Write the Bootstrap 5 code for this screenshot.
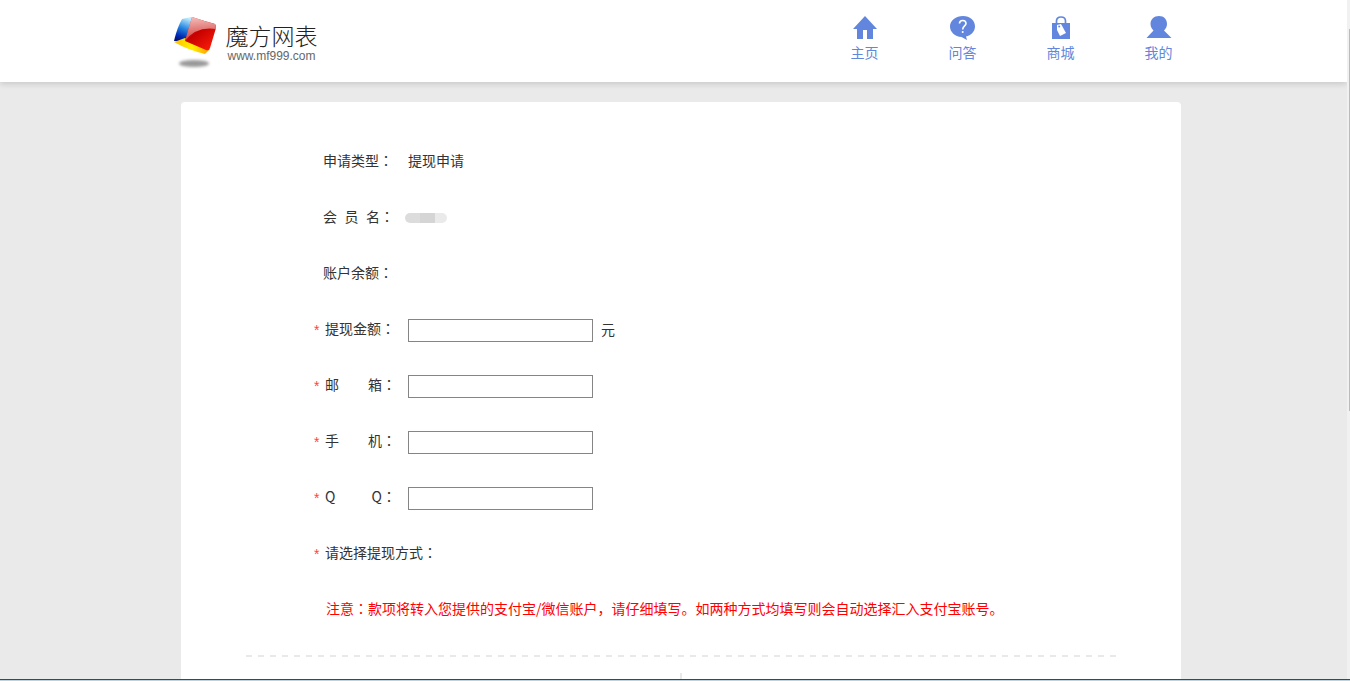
<!DOCTYPE html>
<html lang="zh-CN">
<head>
<meta charset="utf-8">
<meta name="viewport" content="width=device-width, initial-scale=1">
<title>魔方网表 - 提现申请</title>
<link href="https://cdn.jsdelivr.net/npm/bootstrap@5.3.0/dist/css/bootstrap.min.css" rel="stylesheet">
<style>
body { background: #eaeaea; color: #333; font: 400 14px/20px "Noto Sans CJK SC", sans-serif; }
.site-header { background: #fff; box-shadow: 0 2px 6px rgba(0,0,0,.15); height: 82px; z-index: 1; }
.site-width { max-width: 1000px; }
.site-nav { gap: 70px; padding-right: 1px; }
.site-nav a { color: #6286de; text-decoration: none; white-space: nowrap; }
.site-nav svg { height: 24px; margin-bottom: 2px; }
.brand { color: #222; }
.brand-words { padding: 4px 0 0 10px; }
.brand-name { font-size: 23px; line-height: 30px; font-weight: 300; }
.brand-url { font: 12px/12px "Liberation Sans", sans-serif; color: #666; padding-left: 2px; }
.page-area { padding: 20px 0 0 15px; }
.sheet { background: #fff; border-radius: 4px 4px 0 0; padding: 30px 65px 0; }
.form-lines { padding-left: 67px; }
.form-line { height: 56px; }
.field-label { width: 95px; }
.star { width: 12px; color: #ff4343; font: 14px/16px "Liberation Sans", sans-serif; padding: 4px 0 0 1px; }
.no-star { width: 10px; }
.spread { width: 57px; }
.colon { font-family: "Noto Sans CJK TC", sans-serif; }
.entry { width: 185px; height: 23px; border: 1px solid #858585; padding: 0 4px; margin-top: 5px; }
.unit { margin-left: 8px; padding-top: 1px; }
.masked { width: 42px; height: 10px; border-radius: 5px; margin-left: -3px; margin-top: 4px; background: linear-gradient(90deg, #dcdcdc 15px, #d5d5d5 15px 30px, #eaeaea 30px); }
.notice { color: #f00; padding-left: 13px; }
.dashes { height: 2px; margin-top: 19px; background: repeating-linear-gradient(90deg, #e9e9e9 0 6px, transparent 6px 12px); }
.column-rule { width: 2px; height: 300px; margin: 16px auto 0; background: #e9e9e9; }
.scroll-track { width: 3px; background: #f1f1f1; }
.scroll-thumb { width: 1px; height: 382px; margin: 29px 0 0 2px; background: #bbb; }
.bottom-edge { height: 2px; background: #bcd3e0; border-top: 1px solid #40484d; }
</style>
<script src="https://cdn.jsdelivr.net/npm/bootstrap@5.3.0/dist/js/bootstrap.bundle.min.js"></script>
</head>
<body class="vh-100 overflow-hidden d-flex flex-column">
<div class="d-flex flex-grow-1 overflow-hidden">
  <div class="flex-grow-1 d-flex flex-column overflow-hidden">
    <header class="site-header flex-shrink-0 position-relative">
      <div class="site-width mx-auto d-flex justify-content-between">
        <a href="#" class="brand d-flex text-decoration-none pt-3">
          <svg width="42" height="54" viewBox="0 0 42 54" aria-hidden="true">
            <defs>
              <linearGradient id="blue" x1=".6" y1="0" x2=".3" y2="1"><stop offset="0" stop-color="#bceaff"/><stop offset=".45" stop-color="#2585e0"/><stop offset=".8" stop-color="#002bb5"/><stop offset="1" stop-color="#001080"/></linearGradient>
              <linearGradient id="red" x1="0" y1="0" x2=".7" y2="1"><stop offset="0" stop-color="#e94b45"/><stop offset=".5" stop-color="#c60000"/><stop offset="1" stop-color="#f51a08"/></linearGradient>
              <linearGradient id="shine" x1=".3" y1="0" x2=".4" y2="1"><stop offset="0" stop-color="#f3bebb"/><stop offset="1" stop-color="#d03a37"/></linearGradient>
              <linearGradient id="yellow"><stop offset="0" stop-color="#ffbf00"/><stop offset=".5" stop-color="#fff000"/><stop offset="1" stop-color="#ff9d00"/></linearGradient>
              <filter id="soft" x="-20%" y="-70%" width="140%" height="240%"><feGaussianBlur stdDeviation="1.8"/></filter>
            </defs>
            <ellipse cx="20" cy="47.500" rx="15" ry="3.500" fill="#999" filter="url(#soft)"/>
            <path d="M8 3Q12 2 18 1L12 25 0 25Q3 12 8 3Z" fill="url(#blue)"/>
            <path d="M0 26 11 22 36 33 31 38Q14 34 0 26Z" fill="url(#yellow)"/>
            <path d="M18 1Q30 5 41 8 42 9 42 12L36 32Q35 35 32 34L11 25Z" fill="url(#red)"/>
            <path d="M18 1Q30 5 41 8 42 9 42 13 22 10 11 25Z" fill="url(#shine)"/>
          </svg>
          <span class="brand-words d-flex flex-column">
            <span class="brand-name">魔方网表</span>
            <span class="brand-url">www.mf999.com</span>
          </span>
        </a>
        <nav class="site-nav d-flex pt-3">
          <a href="#" class="d-flex flex-column align-items-center"><svg width="24" height="24" viewBox="0 0 24 24" fill="#6286de"><path d="M12 0 24 13H20V23H14V14H10V23H4V13H0Z"/></svg>主页</a>
          <a href="#" class="d-flex flex-column align-items-center"><svg width="26" height="24" viewBox="0 0 26 24" fill="#6286de"><path d="M13 0C20 0 25 4.600 25 10.500 25 15.500 21 19.500 16 20.500L17 24 11.500 21C5 20.500 0 16 0 10.500 0 4.600 6 0 13 0Z"/><path d="M9.500 7.500C9.500 3.500 16 3.500 16 7.500 16 10 12.700 10 12.700 13.500" fill="none" stroke="#fff" stroke-width="1.600"/><circle cx="12.700" cy="16" r="1" fill="#fff"/></svg>问答</a>
          <a href="#" class="d-flex flex-column align-items-center"><svg width="18" height="24" viewBox="0 0 18 24" fill="#6286de"><path d="M4.500 8V5Q4.500 1 9 1T13.500 5V8" fill="none" stroke="#6286de" stroke-width="1.700"/><path d="M0 7H18V23H0Z"/><path d="M5 9 9 8 14 17 8 20 5 14Z" fill="#fff"/><circle cx="7.200" cy="10.500" r="1"/></svg>商城</a>
          <a href="#" class="d-flex flex-column align-items-center"><svg width="26" height="24" viewBox="0 0 26 24" fill="#6286de"><path d="M13 0C18 0 21 3.500 21 8 21 11 19.500 13 18 14.500L25.500 22H.500L7.500 14.500C6 13 4.500 11 4.500 8 4.500 3.500 8 0 13 0Z"/></svg>我的</a>
        </nav>
      </div>
    </header>
    <main class="page-area flex-grow-1 overflow-hidden">
      <form class="sheet site-width mx-auto">
        <div class="form-lines">
          <div class="form-line d-flex align-items-center"><span class="field-label d-flex"><span class="no-star"></span><span>申请类型</span><span class="colon" lang="zh-TW">：</span></span><span>提现申请</span></div>
          <div class="form-line d-flex align-items-center"><span class="field-label d-flex"><span class="no-star"></span><span class="spread d-flex justify-content-between"><span>会</span><span>员</span><span>名</span></span><span class="colon" lang="zh-TW">：</span></span><span class="masked"></span></div>
          <div class="form-line d-flex align-items-center"><span class="field-label d-flex"><span class="no-star"></span><span>账户余额</span><span class="colon" lang="zh-TW">：</span></span></div>
          <div class="form-line d-flex align-items-center"><label for="amount" class="field-label d-flex"><span class="star">*</span><span>提现金额</span><span class="colon" lang="zh-TW">：</span></label><input id="amount" class="entry" type="text"><span class="unit">元</span></div>
          <div class="form-line d-flex align-items-center"><label for="email" class="field-label d-flex"><span class="star">*</span><span class="spread d-flex justify-content-between"><span>邮</span><span>箱</span></span><span class="colon" lang="zh-TW">：</span></label><input id="email" class="entry" type="text"></div>
          <div class="form-line d-flex align-items-center"><label for="phone" class="field-label d-flex"><span class="star">*</span><span class="spread d-flex justify-content-between"><span>手</span><span>机</span></span><span class="colon" lang="zh-TW">：</span></label><input id="phone" class="entry" type="text"></div>
          <div class="form-line d-flex align-items-center"><label for="qq" class="field-label d-flex"><span class="star">*</span><span class="spread d-flex justify-content-between"><span>Q</span><span>Q</span></span><span class="colon" lang="zh-TW">：</span></label><input id="qq" class="entry" type="text"></div>
          <div class="form-line d-flex align-items-center"><span class="star">*</span><span>请选择提现方式<span class="colon" lang="zh-TW">：</span></span></div>
          <div class="form-line d-flex align-items-center notice"><span>注意<span class="colon" lang="zh-TW">：</span>款项将转入您提供的支付宝/微信账户<span class="colon" lang="zh-CN">，</span>请仔细填写。如两种方式均填写则会自动选择汇入支付宝账号。</span></div>
        </div>
        <div class="dashes"></div>
        <div class="column-rule"></div>
      </form>
    </main>
  </div>
  <div class="scroll-track flex-shrink-0"><div class="scroll-thumb"></div></div>
</div>
<div class="bottom-edge flex-shrink-0"></div>
</body>
</html>
